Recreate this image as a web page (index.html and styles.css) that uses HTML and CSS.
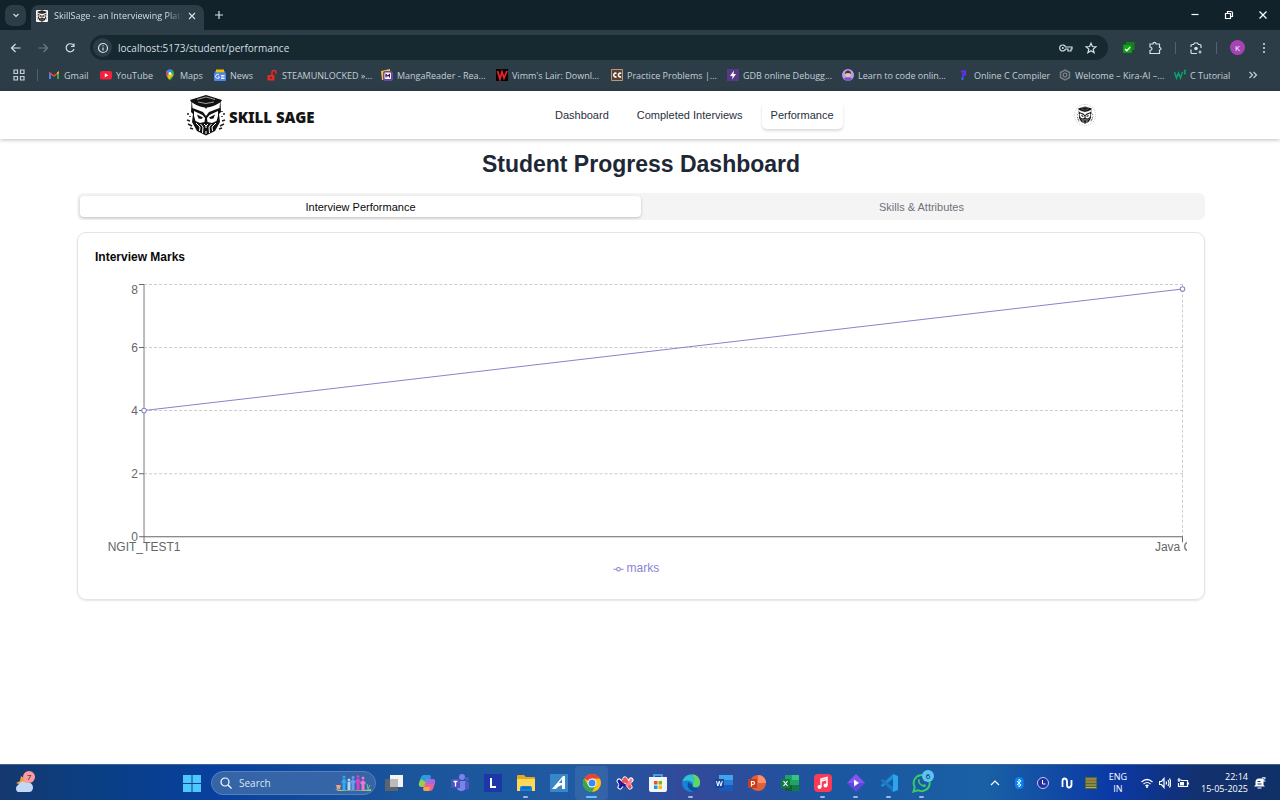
FILE: index.html
```html
<!DOCTYPE html>
<html lang="en">
<head>
<meta charset="utf-8">
<title>SkillSage - an Interviewing Platform</title>
<link rel="stylesheet" href="styles.css">
</head>
<body>
<svg class="defs" aria-hidden="true">
  <symbol id="owl" viewBox="0 0 40 42">
    <path d="M20 1 36 6 34.500 8.500 35 18 33 20 34 28 29 37 20 41.500 11 37 6 28 7 20 5 18 5.500 8.500 4 6Z" fill="#111"/>
    <path d="M6 8.500Q13 13 19 13.500L20 15 21 13.500Q27 13 34 8.500L33.500 14Q27 16.500 23 18L20 22 17 18Q13 16.500 6.500 14Z" fill="#fff"/>
    <path d="M11 5.500 20 3 29 5.500M12 8 20 9.500 28 8" fill="none" stroke="#fff" stroke-width=".6"/>
    <path d="M8 17 16.500 21 19 24 18.500 28 14 29 9.500 27 8 22ZM32 17 23.500 21 21 24 21.500 28 26 29 30.500 27 32 22Z" fill="#fff"/>
    <path d="M11 20.500 17 23.500 15.500 25 12.500 24.500ZM29 20.500 23 23.500 24.500 25 27.500 24.500Z" fill="#111"/>
    <path d="M10 29 14 33 13.500 37M14.500 30 17 33 16.500 39M30 29 26 33 26.500 37M25.500 30 23 33 23.500 39M20 31v3M20 37v3M18 30l2 2 2-2" fill="none" stroke="#fff" stroke-width="1"/>
    <path d="M2 19v2M4 22v1M1 26l3 1M2 30l4 2M4 34l3 1M38 19v2M36 22v1M39 26l-3 1M38 30l-4 2M36 34l-3 1M36 17v1" stroke="#222" stroke-width="1.500"/>
  </symbol>
</svg>

<div class="browser">
  <div class="tabstrip">
    <button class="tab-search" aria-label="Search tabs"><svg width="10" height="10" viewBox="0 0 10 10"><path class="ln" d="M2.500 4 5 6.500 7.500 4"/></svg></button>
    <div class="tab">
      <svg class="favicon" width="12" height="12"><use href="#owl"/></svg>
      <span class="tab-title">SkillSage - an Interviewing Platform</span>
      <button aria-label="Close tab"><svg width="8" height="8" viewBox="0 0 8 8"><path class="ln" d="m1 1 6 6m0-6-6 6"/></svg></button>
    </div>
    <button class="new-tab" aria-label="New tab"><svg width="10" height="10" viewBox="0 0 10 10"><path class="ln" d="M5 1v8M1 5h8"/></svg></button>
    <div class="window-controls">
      <button aria-label="Minimize"><svg width="10" height="10" viewBox="0 0 10 10"><path class="ln" d="M1.500 4.500h7"/></svg></button>
      <button aria-label="Restore"><svg width="10" height="10" viewBox="0 0 10 10"><path class="ln" d="M1.500 3.500h5v5h-5zM3.500 3.500v-2h3.500q1.500 0 1.500 1.500v3.500H7"/></svg></button>
      <button aria-label="Close"><svg width="10" height="10" viewBox="0 0 10 10"><path class="ln" d="m1.500 1.500 7 7m0-7-7 7"/></svg></button>
    </div>
  </div>
  <div class="toolbar">
    <div class="nav-buttons">
      <button aria-label="Back"><svg width="12" height="12" viewBox="0 0 12 12"><path class="ln" d="M10.500 6h-9M5.500 2l-4 4 4 4"/></svg></button>
      <button class="dim" aria-label="Forward"><svg width="12" height="12" viewBox="0 0 12 12"><path class="ln" d="M1.500 6h9M6.500 2l4 4-4 4"/></svg></button>
      <button aria-label="Reload"><svg width="12" height="12" viewBox="0 0 12 12"><path class="ln" d="M9.500 3.500A4 4 0 1 0 10 7M10 1.500v3H7"/></svg></button>
    </div>
    <div class="omnibox">
      <button class="site-info" aria-label="Site information"><svg width="12" height="12" viewBox="0 0 12 12"><circle class="ln" cx="6" cy="6" r="4.500"/><path class="ln" d="M6 5.500v3M6 3.300v1"/></svg></button>
      <input aria-label="Address" value="localhost:5173/student/performance">
      <button aria-label="Passwords"><svg width="14" height="12" viewBox="0 0 14 12"><path class="ln" d="M6.500 5a3 3 0 1 0 0 2h2.500v2h3V7h1V5Z"/><circle cx="3.800" cy="6" r="1" fill="currentColor"/></svg></button>
      <button aria-label="Bookmark this page"><svg width="12" height="12" viewBox="0 0 12 12"><path class="ln" d="m6 1.200 1.400 3.300 3.500.3-2.700 2.300.9 3.500L6 8.700l-3.100 1.900.9-3.500-2.700-2.300 3.500-.3Z"/></svg></button>
    </div>
    <div class="extensions">
      <button aria-label="Tasks extension"><svg width="13" height="13" viewBox="0 0 13 13"><path d="M4 1h8.500v8H4z" fill="#14801f"/><path d="M1 3.500h9V12H1z" fill="#12a51a" stroke="#0b6a14" stroke-width=".5"/><path d="m3 8 1.800 1.800L8.200 6" fill="none" stroke="#fff" stroke-width="1.300"/></svg></button>
      <button aria-label="Extensions"><svg width="14" height="14" viewBox="0 0 14 14"><path class="ln" d="M2 3h3Q5 1.300 6.500 1.300T8 3h3.500v3.500q1.500 0 1.500 1.200T11.500 9v3.500H2V9.500Q4 9.300 4 7.800T2 6Z"/></svg></button>
      <i class="sep"></i>
      <button aria-label="Search with Lens"><svg width="14" height="14" viewBox="0 0 14 14"><path class="ln" d="M2 6V4.500q0-1 1-1h1.500l1-1.500h3l1 1.500H11q1 0 1 1V7M2 8.500v3q0 1 1 1h5"/><circle cx="7" cy="7.500" r="1.800" fill="currentColor"/><path class="ln" d="M11 9.500v3M9.500 11h3"/></svg></button>
      <i class="sep"></i>
      <button class="profile">K</button>
      <button class="menu" aria-label="Menu"><svg width="4" height="12" viewBox="0 0 4 12" fill="currentColor"><circle cx="2" cy="2" r="1"/><circle cx="2" cy="6" r="1"/><circle cx="2" cy="10" r="1"/></svg></button>
    </div>
  </div>
  <nav class="bookmarks" aria-label="Bookmarks">
    <button aria-label="Tab groups"><svg width="12" height="12" viewBox="0 0 12 12"><path class="ln" d="M1 1h3.500v3.500H1zM7.500 1H11v3.500H7.500zM1 7.500h3.500V11H1zM7.500 7.500H11V11H7.500z"/></svg></button>
    <i class="sep"></i>
    <a href="#"><svg viewBox="0 0 12 12"><path d="M1 2.500V10h2V5.500l3 2.500 3-2.500V10h2V2.500L6 6Z" fill="#e8453c"/><path d="M1 4v6h2V5.500Z" fill="#4285f4"/><path d="M11 4v6H9V5.500Z" fill="#34a853"/><path d="m11 2-2 1.500v2L11 4Z" fill="#fbbc04"/></svg><span>Gmail</span></a>
    <a href="#"><svg viewBox="0 0 12 12"><rect y="2" width="12" height="8.500" rx="2" fill="#f5213c"/><path d="M4.800 4.300v4L8.300 6.300Z" fill="#fff"/></svg><span>YouTube</span></a>
    <a href="#"><svg viewBox="0 0 12 12"><path d="M6 11.500Q2 7.500 2 4.500a4 4 0 0 1 8 0Q10 7.500 6 11.500Z" fill="#34a853"/><path d="M6 .500A4 4 0 0 0 2 4.500L4 6l4-5Q7 .500 6 .500Z" fill="#4285f4"/><path d="M2.500 2.500 4.500 4 3 7Q2 6 2 4.500Z" fill="#ea4335"/><path d="M3 7 7.500 5l2 1L5 10.500Z" fill="#fbbc04"/><circle cx="6" cy="4.500" r="1.500" fill="#fff"/></svg><span>Maps</span></a>
    <a href="#"><svg viewBox="0 0 12 12"><path d="M1 2h10v4H1z" fill="#34a853"/><path d="M2 .500h8v3H2z" fill="#fbbc04"/><rect y="3.500" width="12" height="8.500" rx="1" fill="#4f86ec"/><path d="M5 6A2 2 0 1 0 5.500 8H4M7 6.500h3.500M7 8h3.500M7 9.500h3.500" stroke="#fff" stroke-width=".9" fill="none"/></svg><span>News</span></a>
    <a href="#"><svg viewBox="0 0 12 12"><path d="M1.500 6h7v5.500h-7z" fill="#e9281f"/><path d="M6 6V3.500a2 2 0 0 1 4 0V5" fill="none" stroke="#e9281f" stroke-width="1.500"/><circle cx="5" cy="8.700" r="1" fill="#2d3d48"/></svg><span>STEAMUNLOCKED »...</span></a>
    <a href="#"><svg viewBox="0 0 12 12"><path d="M0 2 9 0V4L4 11H1Z" fill="#f6c431"/><rect x="2" y="2" width="10" height="10" rx="2" fill="#6b45a8"/><rect x="3.500" y="3.500" width="6.500" height="6.500" rx="1" fill="#fff"/><path d="M5 8.500v-3l1.800 1.500L8.500 5.500v3" fill="none" stroke="#33234f" stroke-width="1.200"/></svg><span>MangaReader - Rea...</span></a>
    <a href="#"><svg viewBox="0 0 12 12"><path d="M0 0h12v12H0z" fill="#080303"/><path d="m1.500 2 2.500 8L6 3l2 6 3-7" fill="none" stroke="#e3222a" stroke-width="1.800"/></svg><span>Vimm's Lair: Downl...</span></a>
    <a href="#"><svg viewBox="0 0 12 12"><path d="M.500.500h11v11H.500z" fill="#5a4030" stroke="#b49a80"/><path d="M5.500 4.500A1.800 1.800 0 1 0 5.500 7.500M10.200 4.500a1.800 1.800 0 1 0 0 3" fill="none" stroke="#fff" stroke-width="1.500"/></svg><span>Practice Problems |...</span></a>
    <a href="#"><svg viewBox="0 0 12 12"><path d="M0 0h12v12H0z" fill="#563884"/><path d="M7 1.500 3 7h2.500L5 10.500 9 5H6.500Z" fill="#fff"/></svg><span>GDB online Debugg...</span></a>
    <a href="#"><svg viewBox="0 0 12 12"><circle cx="6" cy="6" r="6" fill="#b3a0ed"/><path d="M1.500 10Q6 6 10.500 10 6 14 1.500 10Z" fill="#7a57c9"/><circle cx="6" cy="5.500" r="2.700" fill="#f1bfa5"/><path d="M3 5Q3 1.500 6 1.500T9 5Q6 3 3 5Z" fill="#4b2c33"/></svg><span>Learn to code onlin...</span></a>
    <a href="#"><svg viewBox="0 0 12 12"><path d="M3 2.500h4v3H5v2" fill="none" stroke="#6a2cf0" stroke-width="2"/><path d="M4.500 8v3" stroke="#2b6bf5" stroke-width="2"/></svg><span>Online C Compiler</span></a>
    <a href="#"><svg viewBox="0 0 12 12"><path d="m6 1 4.500 2.500v5L6 11 1.500 8.500v-5Z" fill="none" stroke="#777d80" stroke-width="1.500"/><circle cx="6" cy="6" r="2" fill="none" stroke="#92979a"/></svg><span>Welcome – Kira-AI –...</span></a>
    <a href="#"><svg viewBox="0 0 12 12"><path d="m.500 3 2 6 2-5 2 5 2-6M10 1.500h1.500L10.500 3l1 1.500H10" fill="none" stroke="#06a36a" stroke-width="1.500"/></svg><span>C Tutorial</span></a>
    <button aria-label="More bookmarks"><svg width="10" height="10" viewBox="0 0 10 10"><path class="ln" d="m1.500 2 3 3-3 3M5.500 2l3 3-3 3"/></svg></button>
  </nav>
</div>

<header class="site-header">
  <a class="brand" href="#"><svg width="40" height="42"><use href="#owl"/></svg><span>SKILL SAGE</span></a>
  <nav class="site-nav">
    <a href="#">Dashboard</a>
    <a href="#">Completed Interviews</a>
    <a class="current" href="#">Performance</a>
  </nav>
  <button class="avatar" aria-label="Account"><svg width="18" height="18"><use href="#owl"/></svg></button>
</header>

<main class="page">
  <h1>Student Progress Dashboard</h1>
  <div class="tabs" role="tablist">
    <button role="tab" aria-selected="true">Interview Performance</button>
    <button role="tab" aria-selected="false">Skills &amp; Attributes</button>
  </div>
  <section class="card">
    <h2>Interview Marks</h2>
    <svg class="chart" viewBox="0 0 1091 302" role="img" aria-label="Interview marks line chart">
      <path class="grid" d="M49 4.500h1038M49 67.500h1038M49 130.500h1038M49 193.500h1038M1086.500 4.500v252M49 4.500v252"/>
      <path class="axis-soft" d="M49 4v258"/>
      <path class="axis" d="M44 4.500h5M44 67.500h5M44 130.500h5M44 193.500h5M44 256.500h1043M1086.500 256v6"/>
      <g class="ticks" text-anchor="end">
        <text x="43" y="14">8</text><text x="43" y="72">6</text><text x="43" y="135">4</text><text x="43" y="198">2</text><text x="43" y="261">0</text>
      </g>
      <g class="ticks" text-anchor="middle"><text x="49" y="271">NGIT_TEST1</text></g>
      <text class="ticks" x="1059" y="271">Java Coding</text>
      <path class="series" d="M49 130.500 1086.500 9"/>
      <g class="dots"><circle cx="49" cy="130.500" r="2.300"/><circle cx="1086.500" cy="9" r="2.300"/></g>
      <path class="series" d="M518 289h10"/>
      <g class="dots"><circle cx="523" cy="289" r="1.800"/></g>
      <text class="legend" x="531" y="292">marks</text>
    </svg>
  </section>
</main>

<footer class="taskbar">
  <button class="weather" aria-label="Weather"><svg width="24" height="24" viewBox="0 0 24 24"><path d="m3 12 4-2 1-5 4 3 5 4-4 4Z" fill="#f2a23c"/><path d="M5 21a4 4 0 0 1 0-7Q9 8 14 12q5-1 6 4 0 5-4 5Z" fill="#c4d8f6"/><circle cx="16" cy="6" r="6" fill="#ff9ba0"/><text x="16" y="9" text-anchor="middle" class="badge-text">7</text></svg></button>
  <div class="apps">
    <button aria-label="Start"><svg viewBox="0 0 20 20"><path d="M1 2h8.500v8H1zM10.500 2H19v8h-8.500zM1 11h8.500v8H1zM10.500 11H19v8h-8.500z" fill="#4cc8fa"/></svg></button>
    <label class="search">
      <svg width="12" height="12" viewBox="0 0 12 12"><circle class="ln" cx="5" cy="5" r="4"/><path class="ln" d="m8 8 3.500 3.500"/></svg>
      <input aria-label="Search" placeholder="Search">
      <svg width="36" height="18" viewBox="0 0 36 18"><path d="M0 15q18 3 36 0v2H3Z" fill="#9dc783"/><path d="M1 11h5l-1 4H2Z" fill="#f2a07e"/><g stroke-width="3" fill="none"><path d="M9 5v11M7 9l2-2 2 2" stroke="#35a8ec"/><path d="M14 8v8" stroke="#a8dcf5"/><path d="M18 6v10M16 9l2-2 2 2" stroke="#6b9cf0"/><path d="M23 5v11M21 8l2-2 2 2" stroke="#d343c4"/><path d="M28 7v9M26 10l2-2 2 2" stroke="#f076ce"/></g><g><circle cx="9" cy="3" r="1.500" fill="#35a8ec"/><circle cx="14" cy="6" r="1.500" fill="#a8dcf5"/><circle cx="18" cy="3.500" r="1.500" fill="#6b9cf0"/><circle cx="23" cy="2.500" r="1.500" fill="#d343c4"/><circle cx="28" cy="4" r="1.500" fill="#f076ce"/></g><path d="m33 15-1-5m1 5 2-4" stroke="#78c37a"/></svg>
    </label>
    <button aria-label="Task view"><svg viewBox="0 0 20 20"><path d="M6 2h13v12H6z" fill="#f3f3f3"/><rect x="1" y="6" width="13" height="12" rx="1" fill="#666" opacity=".85"/><path d="M6 6h8v8H6z" fill="#bbb"/></svg></button>
    <button aria-label="Copilot"><svg viewBox="0 0 20 20"><path d="M7 2h5q2 0 2 2l-4 10H5q-4 0-3-4l2-6q1-2 3-2Z" fill="#2a9de0"/><path d="M4 6 2 10q-1 4 3 4h4l1-4Z" fill="#98ce4b"/><path d="M13 18H8q-2 0-2-2l4-10h5q4 0 3 4l-2 6q-1 2-3 2Z" fill="#e862a0"/><path d="m11 6-2 5h8q2-5-2-5Z" fill="#a56ae0"/><path d="M8 18q-3-1-1-4h6l-1 4Z" fill="#f5a63b"/></svg></button>
    <button aria-label="Teams"><svg viewBox="0 0 20 20"><circle cx="12" cy="4" r="3" fill="#7b83eb"/><circle cx="17" cy="6" r="2" fill="#5059c9"/><path d="M7 8h9v6a5 5 0 0 1-9 2Z" fill="#7b83eb"/><path d="M15 9h4v5q0 3-4 3Z" fill="#5059c9"/><rect x="1" y="6" width="9" height="9" rx="1" fill="#4b53bc"/><path d="M3.500 8.500h4M5.500 8.500v5" stroke="#fff" stroke-width="1.300"/></svg></button>
    <button aria-label="L app"><svg viewBox="0 0 20 20"><path d="M1 1h18v18H1z" fill="#1d36a8"/><path d="M8 5v9h5" fill="none" stroke="#fff" stroke-width="2"/></svg></button>
    <button class="open" aria-label="File Explorer"><svg viewBox="0 0 20 20"><path d="M1 3q0-1 1-1h6l2 2h8q1 0 1 1v13H1Z" fill="#e8a921"/><path d="M1 6h18v12H1z" fill="#ffd75a"/><path d="M4 18v-3q0-2 2-2h8q2 0 2 2v3Z" fill="#1680d6"/><path d="M6 15h8" stroke="#0a5aa5"/></svg></button>
    <button aria-label="A app"><svg viewBox="0 0 20 20"><path d="M1 1h18v18H1z" fill="#3987c9"/><path d="M3 16 14 3h2v13h-3v-4q-4 1-6 4Z" fill="#fff"/><path d="m10 10 3-4v4Z" fill="#3987c9"/></svg></button>
    <button class="open active" aria-label="Chrome"><svg viewBox="0 0 20 20"><circle cx="10" cy="10" r="9" fill="#fbc116"/><path d="M10 10 2.200 5.500A9 9 0 0 1 17.800 5.500H10Z" fill="#ea4335"/><path d="M2.200 5.500A9 9 0 0 0 10 19l4-7-4-2-4 2Z" fill="#33a852"/><circle cx="10" cy="10" r="4.500" fill="#fff"/><circle cx="10" cy="10" r="3.500" fill="#4285f4"/></svg></button>
    <button aria-label="Arc"><svg viewBox="0 0 20 20"><g fill="none" stroke-linecap="round" stroke-linejoin="round"><g stroke="#fff" stroke-width="5"><path d="m5 14 5-8 5 8"/><path d="M4 8q6 7 12-1"/></g><path d="M10 6 6 12M10 6l5 8" stroke="#f2505d" stroke-width="3.500"/><path d="M4 8q2 4 6 4.500M5 14l1-2" stroke="#171a9c" stroke-width="3"/><path d="M12 12q3-1 4-5" stroke="#ff8190" stroke-width="3"/></g></svg></button>
    <button aria-label="Microsoft Store"><svg viewBox="0 0 20 20"><path d="M6 5V2h8v3" fill="none" stroke="#45bff1" stroke-width="1.500"/><path d="M1 4h18v13q0 2-2 2H3q-2 0-2-2Z" fill="#f3f5f8"/><path d="M6 8h3.500v3.500H6z" fill="#f25022"/><path d="M10.500 8H14v3.500h-3.500z" fill="#7fba00"/><path d="M6 12.500h3.500V16H6z" fill="#00a4ef"/><path d="M10.500 12.500H14V16h-3.500z" fill="#ffb900"/></svg></button>
    <button class="open" aria-label="Edge"><svg viewBox="0 0 20 20"><circle cx="10" cy="10" r="9" fill="#1683d8"/><path d="M1.500 8A9 9 0 0 1 19 10q0 4-5 4-3 0-2-3Q11 6 1.500 8Z" fill="#35c1c9"/><path d="M11 1.200Q19 2 19 10q0 4-5 4-3 0-2-3 4-5-1-9.800Z" fill="#65d65b"/><path d="M7 9Q5 17 13 18.500q3-.5 5-4-6 2-7-3Z" fill="#0c4ea2"/></svg></button>
    <button aria-label="Word"><svg viewBox="0 0 20 20"><path d="M5 2h14v5H5z" fill="#41a5ee"/><path d="M5 7h14v5H5z" fill="#2b7cd3"/><path d="M5 12h14v6H5z" fill="#185abd"/><path d="M1 6h9v9H1z" fill="#1548a0"/><path d="m2.500 8 1.300 5 1.500-5 1.500 5L8.300 8" fill="none" stroke="#fff"/></svg></button>
    <button aria-label="PowerPoint"><svg viewBox="0 0 20 20"><circle cx="11" cy="10" r="8" fill="#e0603c"/><path d="M11 2a8 8 0 0 1 8 8h-8Z" fill="#ff8f6b"/><path d="M1 6h9v9H1z" fill="#c43e1c"/><path d="M4.500 13.500v-5h1.500q1.500 0 1.500 1.500T6 11.500H4.500" fill="none" stroke="#fff" stroke-width="1.200"/></svg></button>
    <button aria-label="Excel"><svg viewBox="0 0 20 20"><path d="M5 2h14v16H5z" fill="#21a366"/><path d="M12 2h7v5h-7z" fill="#33c481"/><path d="M5 12h14v6H5z" fill="#185c37"/><path d="M12 12h7v6h-7z" fill="#107c41"/><path d="M1 6h9v9H1z" fill="#107c41"/><path d="m3.500 8 4 5m0-5-4 5" stroke="#fff" stroke-width="1.200"/></svg></button>
    <button class="open" aria-label="Music"><svg viewBox="0 0 20 20"><rect x="1" y="1" width="18" height="18" rx="4" fill="#fb3b56"/><path d="M8 14V6l6-1.500v8M8 8l6-1.500" fill="none" stroke="#fff" stroke-width="1.500"/><circle cx="6.500" cy="14" r="2" fill="#fff"/><circle cx="12.500" cy="12.500" r="2" fill="#fff"/></svg></button>
    <button class="open" aria-label="Clipchamp"><svg viewBox="0 0 20 20"><path d="m10 1 9 9-9 9-9-9Z" fill="#6047dc"/><path d="m10 1 9 9H1Z" fill="#8255ed"/><path d="M8 6.500v7l5-3.500Z" fill="#fff"/></svg></button>
    <button class="open" aria-label="VS Code"><svg viewBox="0 0 20 20"><path d="M14 1 19 3v14l-5 2Z" fill="#2ca5ec"/><path d="M14 1v5L3.500 14 1.500 12.500Z" fill="#1d8bd6"/><path d="M14 19v-5L3.500 6 1.500 7.500Z" fill="#1b79c0"/></svg></button>
    <button class="open" aria-label="WhatsApp"><svg viewBox="0 0 20 20"><path d="M1.500 18.500 2.700 14A8 8 0 1 1 6 17.200Z" fill="none" stroke="#38ca68" stroke-width="2"/><path d="M6 6.500Q7 5 8 7.500L7.500 9q1 2 3.500 3l1.200-1q2.300 1 1.800 2-1.500 2-4.500 0T6 9Z" fill="#38ca68"/></svg><span class="badge">6</span></button>
  </div>
  <div class="tray">
    <button aria-label="Hidden icons"><svg viewBox="0 0 12 12"><path class="ln" d="m2 8 4-4 4 4"/></svg></button>
    <button aria-label="Bluetooth"><svg viewBox="0 0 12 12"><rect x="2" width="8.500" height="12" rx="4" fill="#0a84f0"/><path d="m4 4 4 4-2 2V2l2 2-4 4" fill="none" stroke="#fff" stroke-width=".9"/></svg></button>
    <button aria-label="Clock app"><svg viewBox="0 0 12 12"><circle cx="6" cy="6" r="5.500" fill="#21309b" stroke="#c4c9f2"/><path d="M5.500 3v4h3" fill="none" stroke="#fff"/></svg></button>
    <button aria-label="Audio app"><svg viewBox="0 0 12 12"><path d="M1.500 10V4q0-2.500 2-2.500T6 4v4q0 2.500 2 2.500T10.500 8V3" fill="none" stroke="#fff" stroke-width="1.800"/></svg></button>
    <button aria-label="Monitor"><svg viewBox="0 0 12 12"><path d="M0 0h12v12H0z" fill="#4f6d2b"/><path d="M1 2h10M1 5h10M1 8h10M1 10.500h10" stroke="#c3a467"/><path d="M1 3.500h10" stroke="#b25c3c"/></svg></button>
    <button class="lang">ENG<br>IN</button>
    <button class="status" aria-label="Network, volume and battery">
      <svg viewBox="0 0 12 12"><path class="ln" d="M.500 5q5.500-5 11 0M2.500 7q3.500-3 7 0M4.500 9q1.500-1.500 3 0"/><circle cx="6" cy="10" r="1" fill="#fff"/></svg>
      <svg viewBox="0 0 12 12"><path class="ln" d="M.500 4.500h2l2.500-3v9l-2.500-3h-2ZM7 4.500q1 1.500 0 3M9 3q2 3 0 6M10.500 1.500q2.500 4.500 0 9"/></svg>
      <svg viewBox="0 0 12 12"><path class="ln" d="M4 3.500h6.500v6h-9V6M11.500 5.500v2M2 1v4M.500 3h4"/><path d="M3 5h4v3.500H3z" fill="#fff"/></svg>
    </button>
    <button class="clock">22:14<br>15-05-2025</button>
    <button aria-label="Notifications"><svg viewBox="0 0 12 12"><path d="M0 9.500 1.500 8V5A3.500 3.500 0 0 1 5 1.500h4.500V8L11 9.500Z" fill="#fff"/><path d="M3.500 11h4M8 .800h3.500L8.500 4h3" fill="none" stroke="#fff"/><path d="M3.500 4.500h3M3.500 7h4" stroke="#12346f"/></svg></button>
  </div>
</footer>
</body>
</html>
```
FILE: styles.css
```css
* { box-sizing: border-box; }
body {
  margin: 0;
  min-height: 100vh;
  display: flex;
  flex-direction: column;
  background: #fff;
  font-family: "Liberation Sans", Arial, sans-serif;
}
button, input { font: inherit; color: inherit; background: none; border: 0; padding: 0; margin: 0; }
button { display: inline-flex; align-items: center; justify-content: center; }
a { color: inherit; text-decoration: none; }
h1, h2 { margin: 0; }
svg { display: block; flex: none; }
.defs { position: absolute; width: 0; height: 0; }
.ln { fill: none; stroke: currentColor; stroke-width: 1.2; }

/* Browser window */
.browser { background: #2d3d48; color: #d5dfe5; font-family: "Open Sans", "Noto Sans", sans-serif; }
.tabstrip { display: flex; align-items: center; height: 30px; padding-left: 5px; background: #11222b; }
.tab-search { width: 21px; height: 21px; border-radius: 7px; background: #2d3d48; }
.tab {
  display: flex; align-items: center; align-self: flex-end; gap: 6px;
  width: 173px; height: 25px; margin-left: 5px; padding: 0 8px 4px 5px;
  border-radius: 8px 8px 0 0; background: #2d3d48; font-size: 9px;
}
.favicon { background: #fff; border-radius: 1px; }
.tab-title {
  flex: 1; overflow: hidden; white-space: nowrap;
  mask-image: linear-gradient(to right, #000 88%, transparent);
}
.new-tab { margin-left: 10px; }
.window-controls { display: flex; margin-left: auto; color: #fff; }
.window-controls button { width: 34px; height: 30px; }
.toolbar { display: flex; align-items: center; height: 35px; padding-right: 10px; }
.nav-buttons { display: flex; gap: 15px; padding: 0 14px 0 10px; }
.dim { color: #6d7b84; }
.omnibox { flex: 1; display: flex; align-items: center; gap: 12px; height: 25px; padding: 0 11px 0 3px; border-radius: 13px; background: #162830; }
.omnibox input { flex: 1; min-width: 0; margin-left: -6px; font-size: 10px; outline: 0; }
.site-info { width: 19px; height: 19px; border-radius: 50%; background: #2d3d48; }
.extensions { display: flex; align-items: center; gap: 13px; padding-left: 14px; }
.sep { width: 1px; height: 12px; background: #51616c; }
.profile { width: 15px; height: 15px; border-radius: 50%; background: #a744b5; color: #fff; font-size: 8px; }
.menu { padding: 0 4px; }
.bookmarks {
  display: grid; align-items: center; height: 26px; padding: 0 22px 6px 13px;
  grid-template-columns: 24px 11px 52fr 64fr 50fr 52fr 115fr 115fr 115fr 116fr 115fr 116fr 101fr 115fr 74fr 10px;
  color: #c3ced5; font-size: 9px;
}
.bookmarks button { justify-self: start; }
.bookmarks a { display: flex; align-items: center; gap: 4px; min-width: 0; white-space: nowrap; }
.bookmarks a svg { width: 12px; height: 12px; }

/* Site header */
.site-header {
  display: flex; justify-content: space-between; align-items: center;
  height: 48px; padding: 0 184px 0 186px; background: #fff;
  box-shadow: 0 1px 4px rgba(0, 0, 0, .25);
}
.brand { display: flex; align-items: center; gap: 3px; color: #151515; font: 900 15px "Noto Sans", sans-serif; white-space: nowrap; }
.brand span { padding-top: 3px; }
.site-nav { display: flex; gap: 10px; font-size: 11px; color: #28303d; }
.site-nav a { padding: 7px 9px; border-radius: 5px; line-height: 13px; }
.site-nav .current { box-shadow: 0 2px 3px rgba(0, 0, 0, .14); }
.avatar { width: 22px; height: 22px; border: 1px dotted #c9cec9; border-radius: 50%; }

/* Dashboard */
.page { flex: 1; padding: 11px 75px 0 77px; }
h1 { font-size: 23px; line-height: 28px; text-align: center; color: #1d2735; }
.tabs { display: flex; height: 27px; margin-top: 15px; padding: 3px; border-radius: 6px; background: #f4f4f5; font-size: 11px; }
.tabs button { flex: 1; border-radius: 4px; color: #71717a; }
.tabs [aria-selected="true"] { background: #fff; color: #09090b; box-shadow: 0 1px 3px rgba(0, 0, 0, .22); }
.card { margin-top: 12px; padding: 17px; border: 1px solid #e4e4e7; border-radius: 9px; box-shadow: 0 1px 2px rgba(0, 0, 0, .1); }
h2 { font-size: 12px; line-height: 14px; color: #09090b; }
.chart { width: 100%; height: auto; margin-top: 16px; overflow: hidden; }
.grid { fill: none; stroke: #ccc; stroke-dasharray: 3 2; }
.axis { fill: none; stroke: #666; }
.axis-soft { stroke: #bbb; stroke-width: 2; }
.ticks { fill: #666; font-size: 12px; }
.series { fill: none; stroke: #8884c8; }
.dots { fill: #fff; stroke: #8884c8; }
.legend { fill: #8884d8; font-size: 12px; }

/* Taskbar */
.taskbar {
  display: grid; grid-template-columns: 175px 1fr auto; align-items: center;
  height: 36px; color: #fff; font-family: "Open Sans", "Noto Sans", sans-serif; font-size: 9px;
  border-top: 1px solid #3c648f;
  background: linear-gradient(90deg, #14386f, #093f85 8%, #0940a0 17%, #1b559b 32%, #1f5aa2 45%, #33499a 54%, #1b56a0 65%, #1960a5 77%, #0b38a6 87%, #12306b 94%, #103068);
}
.weather { justify-self: start; margin-left: 13px; }
.badge-text { font-size: 8px; fill: #222; }
.apps { display: flex; align-items: center; }
.apps button { position: relative; width: 33px; height: 34px; }
.apps button svg { width: 20px; height: 20px; }
.search {
  display: flex; align-items: center; gap: 7px; width: 165px; height: 24px; margin: 0 1px 0 3px; padding: 0 4px 0 8px;
  border: 1px solid #5680b9; border-radius: 12px; background: #3564a7;
}
.search input { flex: 1; min-width: 0; font-size: 10px; }
.search input::placeholder { color: #dce7f5; opacity: 1; }
.open::after { content: ""; position: absolute; bottom: 2px; left: 14px; width: 5px; height: 2px; border-radius: 1px; background: #a1b6dc; }
.active { border-radius: 4px; background: rgba(255, 255, 255, .08); }
.active::after { left: 11px; width: 11px; background: #60c4ff; }
.badge { position: absolute; top: 4px; right: 4px; width: 12px; height: 12px; border-radius: 50%; background: #5cc3f5; color: #123; font-size: 8px; line-height: 12px; }
.tray { display: flex; align-items: center; gap: 12px; padding-right: 14px; line-height: 12px; }
.tray svg { width: 12px; height: 12px; }
.status { gap: 6px; margin-left: 2px; }
.clock { text-align: right; margin-right: -6px; }
```
